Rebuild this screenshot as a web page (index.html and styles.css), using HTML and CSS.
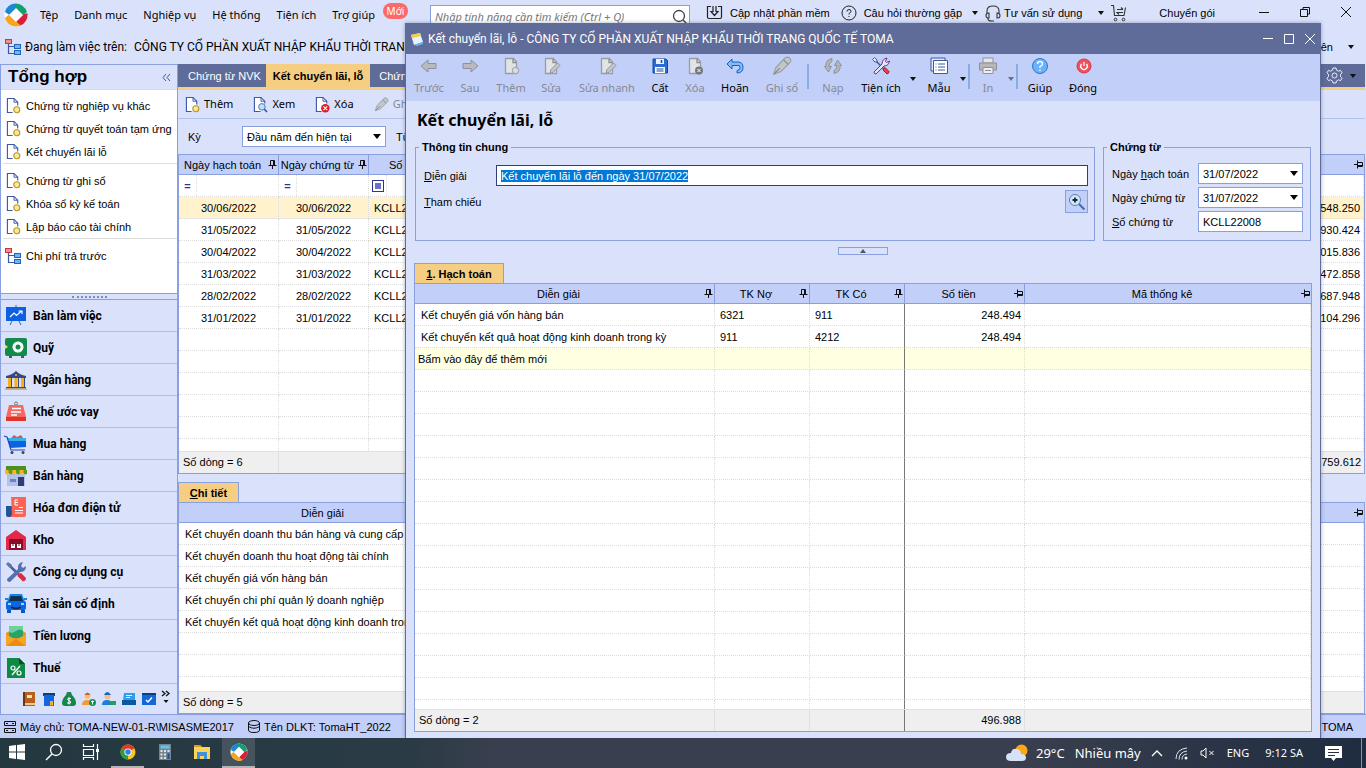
FILE: index.html
```html
<!DOCTYPE html>
<html lang="vi">
<head>
<meta charset="utf-8">
<title>Kết chuyển lãi, lỗ</title>
<link rel="stylesheet" href="styles.css">
</head>
<body>
<svg class="defs" aria-hidden="true">
  <symbol id="doc" viewBox="0 0 16 18"><path d="M7 16.500H1.500v-15h7l4 4V9" fill="#fff" stroke="#3d59a5" stroke-width="1.200"/><path d="M8.500 1.500v4h4" fill="none" stroke="#3d59a5"/><circle cx="11.500" cy="13.500" r="3.200" fill="#fbe98e" stroke="#b8942f" stroke-width="1.200"/></symbol>
  <symbol id="doc-view" viewBox="0 0 16 18"><path d="M8 16.500H1.500v-15h7l4 4V8" fill="#fff" stroke="#3d59a5" stroke-width="1.200"/><path d="M8.500 1.500v4h4" fill="none" stroke="#3d59a5"/><circle cx="9.500" cy="11.500" r="3.500" fill="#b6e2fb" stroke="#5173a8"/><path d="M12 14l3 3" stroke="#3d59a5" stroke-width="1.800"/></symbol>
  <symbol id="doc-del" viewBox="0 0 16 18"><path d="M7 16.500H1.500v-15h7l4 4V8" fill="#fff" stroke="#3d59a5" stroke-width="1.200"/><path d="M8.500 1.500v4h4" fill="none" stroke="#3d59a5"/><circle cx="11" cy="13" r="4.500" fill="#e01b24"/><path d="M9 11l4 4M13 11l-4 4" stroke="#fff" stroke-width="1.300"/></symbol>
  <symbol id="pen" viewBox="0 0 18 18"><path d="M1.500 16.500l2-6L11.500 2a2.800 2.800 0 0 1 4.500 4L8 14z" fill="#c3c5cc" stroke="#9a9ca3"/><path d="M2 16l5-5M10.500 3.500l4 4" stroke="#85878e" fill="none"/></symbol>
  <symbol id="tree" viewBox="0 0 18 18"><path d="M4.500 6v9.500H10M4.500 8.500H10" fill="none" stroke="#3d59a5" stroke-width="1.200"/><rect x="1.500" y="1.500" width="6" height="4" fill="#f58a8a" stroke="#c43c3c"/><rect x="10.500" y="6.500" width="6" height="4" fill="#6cb4fb" stroke="#1e64b4"/><rect x="10.500" y="12.500" width="6" height="4" fill="#6cb4fb" stroke="#1e64b4"/></symbol>
  <symbol id="pin" viewBox="0 0 9 9"><path d="M2.500 5V.5h4V5M.5 5.500h8M4.500 6v3" fill="none" stroke="#111"/><path d="M5.500 1v4" stroke="#111"/></symbol>
  <symbol id="pin-side" viewBox="0 0 9 9"><path d="M3.500 2.500h5v4h-5M3.500.5v8M0 4.500h3" fill="none" stroke="#111"/><path d="M4 5.500h4" stroke="#111"/></symbol>
  <symbol id="brand" viewBox="0 0 24 24"><circle cx="12" cy="12" r="11.500" fill="#fff"/><path d="M1 9A11.500 11.500 0 0 1 11 .6L13 5.500 5.500 12z" fill="#1b87d6"/><path d="M11 .6A11.500 11.500 0 0 1 23 9l-4.500 3.500-8-8z" fill="#14a06e"/><path d="M23.400 10A11.500 11.500 0 0 1 16 22.800L12 18.500l7-7z" fill="#d81f3c"/><path d="M17 22.500A11.500 11.500 0 0 1 1 15l4-3.500 8 8z" fill="#f8a41c"/><path d="M12 5l7 7-7 7-7-7z" fill="#fff"/></symbol>
  <symbol id="gray-doc" viewBox="0 0 20 20"><path d="M4.500 2.500h8l3 3.500v11.500h-11z" fill="#e2e3e7" stroke="#9b9da5" stroke-width="1.300"/><path d="M12 2.500V6.500h3.500" fill="none" stroke="#8b8d95" stroke-width="1.300"/></symbol>
  <symbol id="gray-pen" viewBox="0 0 20 20"><path d="M9 17.500l1-4 6.500-6.500 2.500 2.500-6.500 6.500z" fill="#c5c6cb" stroke="#94969d"/></symbol>
</svg>

<div class="desktop">
<div class="app">
  <header class="menubar">
    <svg class="brand"><use href="#brand"/></svg>
    <nav class="menu">
      <button>Tệp</button><button>Danh mục</button><button>Nghiệp vụ</button><button>Hệ thống</button><button>Tiện ích</button><button>Trợ giúp</button>
    </nav>
    <span class="badge">Mới</span>
    <label class="search"><input type="text" aria-label="Tìm tính năng" placeholder="Nhập tính năng cần tìm kiếm (Ctrl + Q)"><svg width="16" height="18" viewBox="0 0 16 18"><circle cx="7" cy="8" r="5.500" fill="none" stroke="#444" stroke-width="1.300"/><path d="M11 12l4 4" stroke="#444" stroke-width="1.500"/></svg></label>
    <button class="quick q-update"><svg width="17" height="16" viewBox="0 0 17 16"><path d="M5 1.500H1.500V12q0 1.500 1.500 1.500h11q1.500 0 1.500-1.500V1.500H12M7 1v5.500H5l3.500 4 3.500-4h-2V1" fill="none" stroke="#222" stroke-width="1.200"/></svg>Cập nhật phần mềm</button>
    <button class="quick q-faq"><svg width="16" height="16" viewBox="0 0 16 16"><circle cx="8" cy="8" r="7" fill="none" stroke="#222"/><path d="M6 6.500q0-2 2-2t2 1.800q0 1.200-2 2.200v1M8 11v1" fill="none" stroke="#222"/></svg>Câu hỏi thường gặp<i class="caret"></i></button>
    <button class="quick q-help"><svg width="16" height="17" viewBox="0 0 16 17"><path d="M2 8V6q0-5 6-5t6 5v2M4 8v5H3q-2 0-2-2.500T4 8zM12 8v5h1q2 0 2-2.500T12 8zM3 13v1q0 2 4 2h2" fill="none" stroke="#333" stroke-width="1.100"/></svg>Tư vấn sử dụng<i class="caret"></i></button>
    <button class="quick q-cart" aria-label="Mua hàng"><svg width="16" height="17" viewBox="0 0 16 17"><path d="M0 .5h2.500l1 10h9.500l1.500-8M6 4.500h6M10 2.500l2 2M12 7.500H6l2 2" fill="none" stroke="#333" stroke-width="1.100"/><circle cx="4.500" cy="14.500" r="1.300" fill="none" stroke="#333"/><circle cx="12.500" cy="14.500" r="1.300" fill="none" stroke="#333"/></svg></button>
    <button class="quick">Chuyển gói</button>
    <div class="win-ctl dark">
      <button aria-label="Thu nhỏ"><svg viewBox="0 0 12 12"><path d="M1 6.500h10"/></svg></button>
      <button aria-label="Khôi phục"><svg viewBox="0 0 12 12"><path d="M1.500 3.500h7v7h-7zM4 3V1.500h6.500V8H9"/></svg></button>
      <button aria-label="Đóng"><svg viewBox="0 0 12 12"><path d="M1 1l10 10M11 1L1 11"/></svg></button>
    </div>
  </header>
  <div class="workbar">
    <svg width="18" height="18"><use href="#tree"/></svg>
    <span>Đang làm việc trên:</span>
    <span class="company">CÔNG TY CỔ PHẦN XUẤT NHẬP KHẨU THỜI TRANG QUỐC TẾ TOMA</span>
    <button class="user">ên<i class="caret"></i></button>
  </div>

  <div class="main">
    <aside class="side">
      <h2>Tổng hợp<svg width="9" height="9" viewBox="0 0 9 9"><path d="M4 1L1 4.500 4 8M8 1L5 4.500 8 8" fill="none" stroke="#3d59a5"/></svg></h2>
      <div class="links">
        <button><svg><use href="#doc"/></svg>Chứng từ nghiệp vụ khác</button>
        <button><svg><use href="#doc"/></svg>Chứng từ quyết toán tạm ứng</button>
        <button><svg><use href="#doc"/></svg>Kết chuyển lãi lỗ</button>
        <hr>
        <button><svg><use href="#doc"/></svg>Chứng từ ghi sổ</button>
        <button><svg><use href="#doc"/></svg>Khóa sổ kỳ kế toán</button>
        <button><svg><use href="#doc"/></svg>Lập báo cáo tài chính</button>
        <hr>
        <button><svg class="tree"><use href="#tree"/></svg>Chi phí trả trước</button>
      </div>
      <div class="grip"><i></i></div>
      <nav class="modules">
        <button><svg viewBox="0 0 22 22"><path d="M7 16l-2 4M14 16l2 4M11 0v3" stroke="#3a62a8" fill="none"/><path d="M1 2h20v14H1z" fill="#0b5fe0"/><path d="M5 12l4-4 2.500 2.500 5-4.500M13.500 6H17v3" fill="none" stroke="#fff" stroke-width="1.200"/></svg>Bàn làm việc</button>
        <button><svg viewBox="0 0 22 22"><rect y="1" width="22" height="18" rx="2" fill="#128a4a"/><circle cx="13" cy="10" r="4" fill="none" stroke="#fff" stroke-width="3"/><path d="M13 4.500v2M13 13.500v2M7.500 10h2M16.500 10h2" stroke="#bfe8cf"/><path d="M0 7.500L3 10 0 12z" fill="#f4e33c"/><path d="M4 20h3M16 20h3" stroke="#555" stroke-width="2"/></svg>Quỹ</button>
        <button><svg viewBox="0 0 22 22"><path d="M1 7q6-1 10-5 4 4 10 5v2H1z" fill="#35488a"/><circle cx="11" cy="6" r="1" fill="#f5b82a"/><path d="M3 9h3v9H3zM9.500 9h3v9h-3zM16 9h3v9h-3z" fill="#f5b01e"/><path d="M6.500 9v9M13.500 9v9M19.500 9v9" stroke="#35488a"/><path d="M1 18h20v1.500H1z" fill="#35488a"/><path d="M0 19.500h22V21H0z" fill="#e9b142"/></svg>Ngân hàng</button>
        <button><svg viewBox="0 0 22 22"><circle cx="11" cy="2.500" r="1.500" fill="none" stroke="#777"/><path d="M4 4h14l3 12H1z" fill="#f46a62"/><path d="M1 16h20v4H1z" fill="#e23326"/><path d="M7 7.500h9M6 11h10M6 14h6" stroke="#fff" stroke-width="1.500"/></svg>Khế ước vay</button>
        <button><svg viewBox="0 0 22 22"><path d="M6 5l3-3 3 2 4-2 2 3z" fill="#cf5e48"/><path d="M3 5h18v9L5 15z" fill="#0b63e0"/><path d="M3 5h18v3H4z" fill="#36b0ea"/><path d="M-1 3l3 1 4 13h14" fill="none" stroke="#2146c7" stroke-width="1.200"/><circle cx="7" cy="19.500" r="1.500" fill="#444"/><circle cx="18" cy="19.500" r="1.500" fill="#444"/></svg>Mua hàng</button>
        <button><svg viewBox="0 0 22 22"><path d="M2 9h18v12H2z" fill="#b3c0e8"/><path d="M5 14h6v3H5z" fill="#6c82c6"/><path d="M13 12h6v9h-6z" fill="#2f3c74"/><path d="M1 1h20v5H1z" fill="#4f8e22"/><path d="M0 5h22v3q-1.800 3-3.600 0-1.900 3-3.700 0-1.900 3-3.700 0-1.900 3-3.700 0-1.900 3-3.700 0Q1.800 11 0 8z" fill="#f9b51c"/><path d="M3.600 5h3.700v4q-2 1-3.700-1zM11 5h3.700v4q-2 1-3.700-1zM18.400 5H22v4q-2 1-3.600-1z" fill="#5b9a27"/></svg>Bán hàng</button>
        <button><svg viewBox="0 0 22 22"><path d="M1 9h7v11H3q-2 0-2-2z" fill="#1d5796"/><path d="M6 0h15v18q0 2-2 2H5q2-1 2-3z" fill="#fb6455"/><path d="M13 3h-3v5h3M10 5.500h3M14 10.500h4M10 13.500h8M10 16h8" fill="none" stroke="#fff"/></svg>Hóa đơn điện tử</button>
        <button><svg viewBox="0 0 22 22"><path d="M1 8l10-7 10 7v13H1z" fill="#e3284a"/><path d="M4 10h14v11H4z" fill="#8b0c26"/><path d="M6 15h4v4H6zM12 15h4v4h-4z" fill="#fff"/><path d="M8 15v2M14 15v2" stroke="#8b0c26"/></svg>Kho</button>
        <button><svg viewBox="0 0 22 22"><path d="M3 3l13 13" stroke="#46609f" stroke-width="2.500"/><path d="M13 13l3-1 5 5q0 3-3 3.500l-5-5z" fill="#d42f45"/><path d="M1 3l2-2 4 3v2L5 7z" fill="#5a77b8"/><path d="M2 18L13 8q-1-6 5-7l-2 4 2 2 3-2q0 6-6 6L5 21q-3 0-3-3z" fill="#5470b0"/></svg>Công cụ dụng cụ</button>
        <button><svg viewBox="0 0 22 22"><path d="M5 1h12l3 8H2z" fill="#1684e2"/><path d="M6 3h10l2 5H4z" fill="#0e3052"/><rect x="1" y="8" width="20" height="9" rx="2" fill="#0b66e4"/><path d="M0 6h3M19 6h3" stroke="#1684e2" stroke-width="2"/><path d="M6 14q5 3 10 0" stroke="#0e3052" stroke-width="2" fill="none"/><path d="M3 11h3M16 11h3" stroke="#9fd2ff" stroke-width="2"/><path d="M2 17h4v3H2zM16 17h4v3h-4z" fill="#0b56c4"/></svg>Tài sản cố định</button>
        <button><svg viewBox="0 0 22 22"><path d="M1 8l10-6 10 6v12H1z" fill="#e5932a"/><path d="M4 1h14v12H4z" fill="#27a365"/><path d="M4 1h14v5q-3-3-7 0T4 7z" fill="#6fd09d"/><path d="M1 9l10 6 10-6v12H1z" fill="#f7a326"/><path d="M1 21l10-7 10 7z" fill="#ef8b0c"/></svg>Tiền lương</button>
        <button><svg viewBox="0 0 22 22"><path d="M2 1h12l6 6v14H2z" fill="#0f8a46"/><path d="M14 1v6h6z" fill="#0a4f29"/><path d="M7 18l8-9" stroke="#fff" stroke-width="1.300"/><circle cx="8" cy="11" r="2" fill="none" stroke="#fff" stroke-width="1.200"/><circle cx="14" cy="16" r="2" fill="none" stroke="#fff" stroke-width="1.200"/></svg>Thuế</button>
      </nav>
      <div class="mini">
        <svg viewBox="0 0 14 14"><path d="M1 0h12v14H1z" fill="#b8601b"/><path d="M1 0h2v14H1z" fill="#6b3510"/><path d="M5 3h5v3H5z" fill="#fbe2b0"/><path d="M3 11h10v2H3z" fill="#f0c98b"/></svg>
        <svg viewBox="0 0 14 14"><path d="M1 1h12v3H1z" fill="#0a3f80"/><path d="M2 3h10v11H2z" fill="#1466e0"/><path d="M8 9h3v5l-1.500-1L8 14z" fill="#f5b02a"/></svg>
        <svg viewBox="0 0 14 14"><path d="M5 0h4l1 3H4z" fill="#27824c"/><path d="M4 3h6q4 4 4 8 0 3-3 3H3q-3 0-3-3 0-4 4-8z" fill="#13884a"/><path d="M9 6.500H6q-1 1.500 1 2t1.500 2.500H5M7 5v7.500" stroke="#fff" fill="none"/></svg>
        <svg viewBox="0 0 14 14"><circle cx="5.500" cy="4" r="3" fill="#f9bd83"/><path d="M2.500 3q3-5 6 0z" fill="#d45d1c"/><path d="M0 13q0-5 5-5t5 5z" fill="#f39b34"/><circle cx="10.500" cy="10.500" r="3.500" fill="#12925a"/><path d="M10.500 8.500v4M9 9.500h3" stroke="#fff"/></svg>
        <svg viewBox="0 0 14 14"><circle cx="5.500" cy="4.500" r="3" fill="#f9bd83"/><path d="M2 3q3-6 7 0z" fill="#1466c0"/><path d="M0 13q0-5 5-5t5 5z" fill="#1d7ee0"/><path d="M8 9h6v4H8z" fill="#22a064"/></svg>
        <svg viewBox="0 0 14 14"><path d="M2 1h11v8H1z" fill="#2d9ded"/><path d="M4 3.500h6M4 5.500h4" stroke="#fff"/><path d="M0 8h14v5H0z" fill="#0c57a0"/></svg>
        <svg viewBox="0 0 14 14"><path d="M0 1h14v12H0z" fill="#1268d8"/><path d="M0 1h14v2H0z" fill="#083f88"/><path d="M4 8l2 2 4-4.500" stroke="#fff" stroke-width="1.500" fill="none"/></svg>
        <svg class="more" viewBox="0 0 8 14"><path d="M0 1l3 2.500L0 6M4 1l3 2.500L4 6" stroke="#111" stroke-width="1.300" fill="none"/><path d="M1.500 10h5L4 13z" fill="#111"/></svg>
      </div>
    </aside>

    <section class="content">
      <div class="tabs"><button class="first">Chứng từ NVK</button><button class="on">Kết chuyển lãi, lỗ</button><button>Chứng</button>
        <button class="gear" aria-label="Tùy chọn"><svg width="17" height="17" viewBox="0 0 17 17"><path d="M7 1h3l.5 2.200 2 1L14.500 3.300l1.500 2.500-1.500 1.700v2L16 11.200l-1.500 2.500-2-.9-2 1.200L10 16H7l-.5-2-2-1.200-2 .9L1 11.200l1.500-1.700v-2L1 5.800l1.500-2.500 2 .9 2-1z" fill="none" stroke="#e8ecfa"/><circle cx="8.500" cy="8.500" r="2.500" fill="none" stroke="#e8ecfa"/></svg><i class="caret"></i></button></div>
      <div class="tools">
        <button><svg><use href="#doc"/></svg>Thêm</button><button><svg><use href="#doc-view"/></svg>Xem</button><button><svg><use href="#doc-del"/></svg>Xóa</button><button disabled><svg><use href="#pen"/></svg>Ghi sổ</button>
      </div>
      <div class="filter"><label for="ky">Kỳ</label><span class="combo"><select id="ky"><option>Đầu năm đến hiện tại</option></select></span><span>Từ</span></div>
      <div class="grid upper">
        <div class="rows">
        <table>
          <colgroup><col class="c-100"><col class="c-90"><col class="c-100"><col><col class="c-100"></colgroup>
          <thead><tr><th>Ngày hạch toán<svg><use href="#pin"/></svg></th><th>Ngày chứng từ<svg><use href="#pin"/></svg></th><th class="cut">Số</th><th></th><th><svg><use href="#pin-side"/></svg></th></tr></thead>
          <tbody>
            <tr class="find"><td><b class="op">=</b></td><td><b class="op">=</b></td><td><b class="op"><i class="box"></i></b></td><td></td><td></td></tr>
            <tr class="sel"><td>30/06/2022</td><td>30/06/2022</td><td class="l">KCLL22</td><td></td><td class="r">548.250</td></tr>
            <tr><td>31/05/2022</td><td>31/05/2022</td><td class="l">KCLL22</td><td></td><td class="r">930.424</td></tr>
            <tr><td>30/04/2022</td><td>30/04/2022</td><td class="l">KCLL22</td><td></td><td class="r">015.836</td></tr>
            <tr><td>31/03/2022</td><td>31/03/2022</td><td class="l">KCLL22</td><td></td><td class="r">472.858</td></tr>
            <tr><td>28/02/2022</td><td>28/02/2022</td><td class="l">KCLL22</td><td></td><td class="r">687.948</td></tr>
            <tr><td>31/01/2022</td><td>31/01/2022</td><td class="l">KCLL22</td><td></td><td class="r">104.296</td></tr>
            <tr><td></td><td></td><td></td><td></td><td></td></tr><tr><td></td><td></td><td></td><td></td><td></td></tr><tr><td></td><td></td><td></td><td></td><td></td></tr><tr><td></td><td></td><td></td><td></td><td></td></tr><tr><td></td><td></td><td></td><td></td><td></td></tr><tr><td></td><td></td><td></td><td></td><td></td></tr>
          </tbody>
        </table>
        </div>
        <div class="foot"><span class="c-100 cell">Số dòng = 6</span><span class="sum">759.612</span></div>
      </div>
      <div class="lower">
        <button class="tab"><u>C</u>hi tiết</button>
        <div class="grid">
          <div class="rows">
          <table>
            <colgroup><col class="c-300"><col></colgroup>
            <thead><tr><th>Diễn giải</th><th><svg><use href="#pin-side"/></svg></th></tr></thead>
            <tbody class="left">
              <tr><td>Kết chuyển doanh thu bán hàng và cung cấp</td><td></td></tr>
              <tr><td>Kết chuyển doanh thu hoạt động tài chính</td><td></td></tr>
              <tr><td>Kết chuyển giá vốn hàng bán</td><td></td></tr>
              <tr><td>Kết chuyển chi phí quản lý doanh nghiệp</td><td></td></tr>
              <tr><td>Kết chuyển kết quả hoạt động kinh doanh trong kỳ</td><td></td></tr>
              <tr><td></td><td></td></tr><tr><td></td><td></td></tr><tr><td></td><td></td></tr>
            </tbody>
          </table>
          </div>
          <div class="foot"><span class="cell plain">Số dòng = 5</span></div>
        </div>
      </div>
    </section>
  </div>

  <footer class="status">
    <svg width="12" height="12" viewBox="0 0 12 12"><path d="M.5.500h11v4H.5zM.5 7.500h11v4H.5zM2 2.500h2M2 9.500h2M8 2.500h2M8 9.500h2" fill="none" stroke="#111"/></svg><span>Máy chủ: TOMA-NEW-01-R\MISASME2017</span>
    <svg class="db" width="12" height="13" viewBox="0 0 12 13"><ellipse cx="6" cy="3" rx="5.500" ry="2.500" fill="none" stroke="#111"/><path d="M.5 3v7q0 2.500 5.500 2.500t5.500-2.500V3M.5 6.500Q6 10 11.500 6.500" fill="none" stroke="#111"/></svg><span>Tên DLKT: TomaHT_2022</span>
    <span class="who">TOMA</span>
  </footer>

  <div class="dialog" role="dialog" aria-label="Kết chuyển lãi, lỗ">
    <div class="title"><svg width="14" height="14" viewBox="0 0 14 14"><path d="M1 3l9-2 3 9-9 3z" fill="#e6f2fd"/><path d="M1 3l9-2 1 3-9 2z" fill="#f4cf45"/><path d="M4 13l9-3v2l-6 2z" fill="#6fb2ea"/></svg><span>Kết chuyển lãi, lỗ - CÔNG TY CỔ PHẦN XUẤT NHẬP KHẨU THỜI TRANG QUỐC TẾ TOMA</span>
      <div class="win-ctl light">
        <button aria-label="Thu nhỏ"><svg viewBox="0 0 12 12"><path d="M1 5.500h10"/></svg></button>
        <button aria-label="Phóng to"><svg viewBox="0 0 12 12"><path d="M1.500 1.500h9v9h-9z"/></svg></button>
        <button aria-label="Đóng"><svg viewBox="0 0 12 12"><path d="M1 1l10 10M11 1L1 11"/></svg></button>
      </div>
    </div>
    <div class="bar">
      <button class="w40" disabled><svg viewBox="0 0 20 20"><path d="M2 10l7-6v3.500h8v5H9V16z" fill="#b9bac0" stroke="#8f9198"/></svg>Trước</button>
      <button class="w42" disabled><svg viewBox="0 0 20 20"><path d="M18 10l-7-6v3.500H3v5h8V16z" fill="#b9bac0" stroke="#8f9198"/></svg>Sau</button>
      <button class="w40" disabled><svg viewBox="0 0 20 20"><use href="#gray-doc"/><circle cx="14.500" cy="14.500" r="3.200" fill="#dcdde1" stroke="#9b9da5"/></svg>Thêm</button>
      <button class="w40" disabled><svg viewBox="0 0 20 20"><use href="#gray-doc"/><use href="#gray-pen"/></svg>Sửa</button>
      <button class="w72" disabled><svg viewBox="0 0 20 20"><use href="#gray-doc"/><use href="#gray-pen"/></svg>Sửa nhanh</button>
      <button class="w34"><svg viewBox="0 0 20 20"><path d="M3 3h13l1.500 1.500V17H3z" fill="#2a6bd0" stroke="#134a9c"/><path d="M6 3h8v5H6z" fill="#e8f1fd"/><path d="M11.500 4v3" stroke="#134a9c" stroke-width="1.500"/><path d="M5 11h10v6H5z" fill="#fff"/><path d="M6.500 13h7M6.500 15h7" stroke="#134a9c"/></svg>Cất</button>
      <button class="w36" disabled><svg viewBox="0 0 20 20"><use href="#gray-doc"/><circle cx="14" cy="14.500" r="4" fill="#77797f"/><path d="M12.500 13l3 3M15.500 13l-3 3" stroke="#fff"/></svg>Xóa</button>
      <button class="w44"><svg viewBox="0 0 20 20"><path d="M2 8l5-5v3h6q5 0 5 5.500T12 17v-2.500q3 0 3-3T12 9.500H7v3.500z" fill="#7fbcfa" stroke="#1763c0"/></svg>Hoãn</button>
      <button class="w50" disabled><svg viewBox="0 0 18 18"><use href="#pen"/></svg>Ghi sổ</button>
      <i class="sep"></i>
      <button class="w48" disabled><svg viewBox="0 0 20 20"><path d="M9 2.500Q2 4 3 10.500H1.500l4 5.500 3-5.500H6Q6 6.500 9 5.500zM11 17.500q7-1.500 6-8h1.500l-4-5.500-3 5.500H14q0 4-3 5z" fill="#b4b6bd" stroke="#84868d" stroke-width=".8"/></svg>Nạp</button>
      <button class="w48"><svg viewBox="0 0 20 20"><path d="M4 4l11 11" stroke="#3f599c" stroke-width="1.500"/><path d="M1.500 3.500l2-2L6 4v2H4z" fill="#dfe7f8" stroke="#3f599c"/><path d="M3 16L11 8q0-5 5-6l-1.500 3.500 1 1L18.500 5q-1 5-5.500 5L5 18q-2 0-2-2z" fill="#dfe7f8" stroke="#7a2f86"/><path d="M12.500 12.500l1.500-1 4 4q0 2-2 2.500l-4-4z" fill="#e8424a" stroke="#9b1c28"/></svg>Tiện ích</button><button class="drop w15" aria-label="Mở tiện ích"><i class="caret"></i></button>
      <button class="w38"><svg viewBox="0 0 20 20"><path d="M2 2h14v13H2z" fill="#dfe8fb" stroke="#3f599c"/><path d="M4.500 4.500h14v13h-14z" fill="#fff" stroke="#3f599c"/><path d="M6.500 8h1M9 8h7M6.500 11h1M9 11h7M6.500 14h1M9 14h7" stroke="#3f599c"/></svg>Mẫu</button><button class="drop w10" aria-label="Chọn mẫu"><i class="caret"></i></button>
      <i class="sep"></i>
      <button class="w36" disabled><svg viewBox="0 0 20 20"><path d="M5 2h10v5H5z" fill="#e5e5e8" stroke="#8f9198"/><path d="M1.500 7h17v7h-17z" fill="#b6b7bc" stroke="#8f9198"/><path d="M5 11.500h10v6H5z" fill="#eee" stroke="#8f9198"/><path d="M7 14.500h6" stroke="#8f9198"/></svg>In</button><button class="drop w10" disabled aria-label="Chọn in"><i class="caret"></i></button>
      <i class="sep"></i>
      <button class="w44"><svg viewBox="0 0 20 20"><circle cx="10" cy="10" r="7.500" fill="#6cb2fb" stroke="#2d76cc"/><path d="M7.500 8q0-2.500 2.500-2.500T12.500 8q0 1.500-2.500 2.500V12M10 13.500V15" fill="none" stroke="#fff" stroke-width="1.300"/></svg>Giúp</button>
      <button class="w42"><svg viewBox="0 0 20 20"><circle cx="11" cy="10" r="7" fill="#f0525c" stroke="#d23a46"/><path d="M8.500 8a3.300 3.300 0 1 0 5 0M11 6v4" fill="none" stroke="#fff" stroke-width="1.300"/></svg>Đóng</button>
    </div>
    <div class="body">
      <h1>Kết chuyển lãi, lỗ</h1>
      <div class="boxes">
        <fieldset class="general"><legend>Thông tin chung</legend>
          <div class="line"><label for="dg"><u>D</u>iễn giải</label><input id="dg" type="text" value="Kết chuyển lãi lỗ đến ngày 31/07/2022"></div>
          <div class="line"><span class="lab"><u>T</u>ham chiếu</span><button class="zoom" aria-label="Chọn tham chiếu"><svg width="18" height="18" viewBox="0 0 18 18"><circle cx="7" cy="7" r="5.500" fill="#c9eafb" stroke="#5b7fb5"/><path d="M7 4.500v5M4.500 7h5" stroke="#223" stroke-width="1.800"/><path d="M11 11l5.500 5.500" stroke="#4c6db0" stroke-width="2.200"/></svg></button></div>
        </fieldset>
        <fieldset class="voucher"><legend>Chứng từ</legend>
          <div class="line"><label for="d1">Ngày <u>h</u>ạch toán</label><span class="combo"><select id="d1"><option>31/07/2022</option></select></span></div>
          <div class="line"><label for="d2">Ngày <u>c</u>hứng từ</label><span class="combo"><select id="d2"><option>31/07/2022</option></select></span></div>
          <div class="line"><label for="no"><u>S</u>ố chứng từ</label><input id="no" type="text" value="KCLL22008"></div>
        </fieldset>
      </div>
      <button class="fold" aria-label="Thu gọn"><i></i></button>
      <button class="tab wide"><u>1</u>. Hạch toán</button>
      <div class="grid entry">
        <div class="rows">
        <table>
          <colgroup><col class="c-300"><col class="c-95"><col class="c-95"><col class="c-120"><col></colgroup>
          <thead><tr><th>Diễn giải<svg><use href="#pin"/></svg></th><th>TK Nợ<svg><use href="#pin"/></svg></th><th>TK Có<svg><use href="#pin"/></svg></th><th>Số tiền<svg><use href="#pin-side"/></svg></th><th>Mã thống kê<svg><use href="#pin-side"/></svg></th></tr></thead>
          <tbody class="left">
            <tr><td>Kết chuyển giá vốn hàng bán</td><td>6321</td><td>911</td><td class="r">248.494</td><td></td></tr>
            <tr><td>Kết chuyển kết quả hoạt động kinh doanh trong kỳ</td><td>911</td><td>4212</td><td class="r">248.494</td><td></td></tr>
            <tr class="new"><td>Bấm vào đây để thêm mới</td><td></td><td></td><td></td><td></td></tr>
            <tr><td></td><td></td><td></td><td></td><td></td></tr><tr><td></td><td></td><td></td><td></td><td></td></tr><tr><td></td><td></td><td></td><td></td><td></td></tr><tr><td></td><td></td><td></td><td></td><td></td></tr><tr><td></td><td></td><td></td><td></td><td></td></tr><tr><td></td><td></td><td></td><td></td><td></td></tr><tr><td></td><td></td><td></td><td></td><td></td></tr><tr><td></td><td></td><td></td><td></td><td></td></tr><tr><td></td><td></td><td></td><td></td><td></td></tr><tr><td></td><td></td><td></td><td></td><td></td></tr><tr><td></td><td></td><td></td><td></td><td></td></tr><tr><td></td><td></td><td></td><td></td><td></td></tr><tr><td></td><td></td><td></td><td></td><td></td></tr><tr><td></td><td></td><td></td><td></td><td></td></tr><tr><td></td><td></td><td></td><td></td><td></td></tr><tr><td></td><td></td><td></td><td></td><td></td></tr>
          </tbody>
        </table>
        </div>
        <div class="foot"><span class="c-300 cell">Số dòng = 2</span><span class="c-95 cell"></span><span class="c-95 cell strong"></span><span class="c-120 cell r">496.988</span></div>
      </div>
    </div>
  </div>
</div>

<div class="taskbar">
  <button class="t" aria-label="Bắt đầu"><svg viewBox="0 0 18 18"><path d="M1 3l7-1v6.500H1zM9 2l8-1v7.500H9zM1 9.500h7V16l-7-1zM9 9.500h8V17l-8-1z" fill="#fff"/></svg></button>
  <button class="t" aria-label="Tìm kiếm"><svg viewBox="0 0 18 18"><circle cx="11" cy="7" r="5.500" fill="none" stroke="#fff" stroke-width="1.300"/><path d="M7 11l-6 6" stroke="#fff" stroke-width="1.500"/></svg></button>
  <button class="t" aria-label="Xem tác vụ"><svg viewBox="0 0 18 18"><path d="M1.500 1v2.500h10V1M1.500 6.500h10v6h-10zM1.500 17v-2.500h10V17M15.500 1v16" fill="none" stroke="#fff" stroke-width="1.200"/><path d="M14 6h3v3h-3z" fill="#fff"/></svg></button>
  <button class="t open" aria-label="Chrome"><svg viewBox="0 0 18 18"><circle cx="9" cy="9" r="7.500" fill="#f7c51e"/><path d="M9 9L2.500 5.200A7.500 7.500 0 0 1 15.500 5.200z" fill="#e0392b"/><path d="M9 9L2.500 5.200A7.500 7.500 0 0 0 9 16.500z" fill="#2a9d4b"/><circle cx="9" cy="9" r="3.600" fill="#fff"/><circle cx="9" cy="9" r="2.700" fill="#2f7de8"/></svg></button>
  <button class="t" aria-label="Máy tính"><svg viewBox="0 0 18 18"><path d="M3 1h12v16H3z" fill="#76848e"/><path d="M4.500 2.500h9v3h-9z" fill="#5ec3f0"/><path d="M4.500 7h2v2h-2zM8 7h2v2H8zM4.500 10.500h2v2h-2zM8 10.500h2v2H8zM4.500 14h2v2h-2zM8 14h2v2H8zM11.500 7h2v2h-2z" fill="#dce4e8"/><path d="M11.500 10.500h2V16h-2z" fill="#1b4f9e"/></svg></button>
  <button class="t" aria-label="Thư mục"><svg viewBox="0 0 18 18"><path d="M1 2h6l2 2h8v12H1z" fill="#fbd25a"/><path d="M1 2h6l1.500 2H1z" fill="#d89b1b"/><path d="M4 9h10v7h-3v-3H7v3H4z" fill="#3b91dc"/></svg></button>
  <button class="t open active" aria-label="MISA"><svg viewBox="0 0 18 18"><use href="#brand"/></svg></button>
  <div class="tray">
    <svg width="22" height="18" viewBox="0 0 22 18"><circle cx="15.500" cy="6.500" r="6" fill="#fba918"/><path d="M5 17q-5 0-5-4t5-4q1-5 6-4 4 1 4 5 5 0 5 3.500T16 17z" fill="#d5e2f8"/></svg>
    <span class="temp">29°C</span><span class="temp sky">Nhiều mây</span>
    <svg width="12" height="7" viewBox="0 0 12 7"><path d="M1 6l5-5 5 5" fill="none" stroke="#fff" stroke-width="1.300"/></svg>
    <svg width="13" height="13" viewBox="0 0 13 13"><path d="M1 12Q1 2 12 1M4 12.500Q4 5 12 4M7 12.500Q7 7.500 12 7" fill="none" stroke="#dfe3ea"/><circle cx="11" cy="11" r="1.500" fill="#fff"/></svg>
    <svg width="15" height="12" viewBox="0 0 15 12"><path d="M1 4h2l3-3v10L3 8H1zM9.500 4l4 4M13.500 4l-4 4" fill="none" stroke="#fff"/></svg>
    <span class="lang">ENG</span><span class="clock">9:12 SA</span>
    <svg width="17" height="17" viewBox="0 0 17 17"><path d="M0 1h17v12h-6l-2.500 3L6 13H0z" fill="#fff"/><path d="M3 4.500h11M3 7.500h11M3 10.500h7" stroke="#263142"/></svg>
    <i class="edge"></i>
  </div>
</div>
</div>
<script src="app.js"></script>
</body>
</html>
```
FILE: styles.css
```css
:root {
  --bg: #dae2fb;
  --head: #c2cff9;
  --line: #8a9fdf;
  --title: #5f6c99;
  --gold: #f5cd83;
  --dot: #dcdcdc;
  --ui: "Noto Sans", "Open Sans", sans-serif;
  --caption: Roboto, "Noto Sans", sans-serif;
}
* { box-sizing: border-box; }
body { margin: 0; font: 11px/14px "Liberation Sans", Arial, sans-serif; color: #000; }
button { font: inherit; color: inherit; background: none; border: 0; padding: 0; white-space: nowrap; }
input, select { font: inherit; color: inherit; border: 1px solid var(--line); background: #fff; border-radius: 0; outline: 0; min-width: 0; }
svg { flex: none; overflow: visible; }
.defs { position: absolute; width: 0; height: 0; }
.caret { border: 3px solid transparent; border-top: 4px solid #111; border-bottom: 0; }

.desktop { display: flex; flex-direction: column; height: 100vh; overflow: hidden; }
.app { position: relative; flex: 1; min-height: 0; display: flex; flex-direction: column; background: var(--bg); overflow: hidden; }

/* top bars */
.menubar { display: flex; align-items: center; height: 30px; padding-left: 4px; font-family: var(--ui); white-space: nowrap; }
.brand { width: 24px; height: 24px; margin-right: 12px; }
.menu { display: flex; gap: 16px; }
.badge { align-self: flex-start; margin: 3px 22px 0 8px; width: 25px; border-radius: 8px; background: #fb6a68; color: #fff; font: 10px/16px var(--ui); text-align: center; }
.search { display: flex; align-items: center; align-self: flex-end; width: 260px; height: 25px; background: #fff; border: 1px solid var(--line); padding: 0 1px 2px 4px; }
.search input { flex: 1; border: 0; font: italic 11px/14px var(--ui); padding: 0; }
.search input::placeholder { color: #777; }
.quick { display: flex; align-items: center; gap: 7px; font-family: "Liberation Sans", Arial, sans-serif; padding-bottom: 4px; }
.q-update { margin-left: 16px; }
.q-faq { margin-left: 11px; }
.q-faq .caret { margin-left: 3px; }
.q-help { margin-left: 7px; gap: 3px; }
.q-help .caret { margin-left: 13px; }
.q-cart { margin: 0 32px 0 7px; }
.win-ctl { display: flex; margin-left: auto; }
.win-ctl svg { display: block; width: 12px; height: 12px; fill: none; }
.dark { gap: 29px; padding: 0 14px 6px 0; }
.dark svg { stroke: #111; }
.light { gap: 9px; padding-right: 4px; }
.light svg { stroke: #fff; }
.workbar { display: flex; align-items: center; height: 34px; padding: 0 12px 0 4px; font: 12px/16px var(--caption); white-space: nowrap; }
.workbar > span { margin-left: 3px; }
.workbar .company { margin-left: 7px; }
.user { display: flex; align-items: center; gap: 15px; margin-left: auto; font: 11px/14px "Liberation Sans", Arial, sans-serif; }

.main { flex: 1; min-height: 0; display: flex; }

/* sidebar */
.side { width: 178px; flex: none; display: flex; flex-direction: column; border: solid var(--line); border-width: 1px 1px 0; }
.side h2 { display: flex; align-items: center; justify-content: space-between; margin: 0; padding: 0 6px 0 7px; height: 24px; font-size: 17px; line-height: 24px; }
.links { flex: 1; min-height: 0; overflow: hidden; background: #fff; border-top: 1px solid #d0d7ee; padding: 4px 0 0 2px; }
.links button { display: flex; align-items: center; width: 100%; height: 23px; padding-left: 3px; gap: 5px; }
.links svg { width: 15px; height: 17px; }
.links .tree { width: 18px; height: 18px; margin: 0 -1px 0 -2px; }
.links hr { border: 0; border-top: 1px solid #ddd; margin: 0 0 5px; }
.grip { height: 7px; flex: none; border: solid var(--line); border-width: 1px 0; display: flex; justify-content: center; align-items: center; }
.grip i { width: 35px; border-top: 2px dotted #6f8fc9; }
.modules { display: flex; flex-direction: column; }
.modules button { display: flex; align-items: center; gap: 6px; height: 32px; padding-left: 4px; border-bottom: 1px solid #aebfea; font: bold 12px/16px var(--caption); }
.modules svg { width: 22px; height: 22px; }
.mini { display: flex; align-items: center; gap: 6px; height: 30px; padding-left: 21px; }
.mini svg { width: 14px; height: 14px; }
.mini .more { width: 8px; margin-top: -4px; }

/* document area */
.content { flex: 1; min-width: 0; display: flex; flex-direction: column; padding-right: 1px; }
.tabs { display: flex; height: 26px; background: var(--title); border-bottom: 3px solid var(--gold); color: #fff; }
.tabs button { padding: 0 9px; }
.tabs .first { padding: 0 5px 0 10px; }
.tabs .on { background: var(--gold); color: #000; font-weight: bold; padding: 0 7px; }
.tabs .gear { display: flex; align-items: center; gap: 7px; margin-left: auto; }
.tools { display: flex; align-items: center; height: 29px; gap: 20px; padding-left: 7px; border-bottom: 1px solid #b3c1ee; font: 11px/14px var(--ui); }
.tools button { display: flex; align-items: center; gap: 4px; }
.tools svg { width: 15px; height: 17px; }
button:disabled { color: #858993; }
.filter { display: flex; align-items: center; height: 35px; padding-left: 10px; gap: 10px; }
.filter label { width: 44px; }
.filter .combo { width: 144px; }
.combo { position: relative; display: flex; }
.combo::after { content: ""; position: absolute; right: 5px; top: 8px; border: 4px solid transparent; border-top: 5px solid #000; border-bottom: 0; pointer-events: none; }
.combo select { appearance: none; width: 100%; height: 21px; padding: 0 4px; }

/* grids */
.grid { display: flex; flex-direction: column; min-height: 0; border: 1px solid var(--line); background: #fff; }
.upper { flex: 57 1 0; }
.lower { flex: 43 1 0; min-height: 0; display: flex; flex-direction: column; }
.lower .tab { margin-top: 8px; }
.lower .grid { flex: 1; }
.rows { flex: 1; min-height: 0; overflow: hidden; }
table { width: 100%; table-layout: fixed; border-collapse: separate; border-spacing: 0; }
.c-90 { width: 90px; } .c-95 { width: 95px; } .c-100 { width: 100px; } .c-120 { width: 120px; } .c-300 { width: 300px; }
th { position: relative; height: 20px; padding: 0 12px 0 0; font-weight: normal; background: var(--head); border: solid var(--line); border-width: 0 1px 1px 0; white-space: nowrap; }
th.cut { text-align: left; padding-left: 20px; }
th svg { position: absolute; right: 1px; top: 5px; width: 9px; height: 9px; }
th:last-child { border-right: 0; }
td { height: 22px; padding: 0; text-align: center; border: dotted var(--dot); border-width: 0 1px 1px 0; white-space: nowrap; overflow: hidden; }
td.l { text-align: left; padding-left: 5px; }
td.r, tbody.left td.r { text-align: right; padding-right: 3px; }
tbody.left td { text-align: left; padding-left: 5px; }
tbody.left td:first-child { padding-left: 6px; }
.sel td { background: #fff2cc; }
.op { display: flex; align-items: center; justify-content: center; width: 18px; height: 21px; border-right: 1px dotted var(--dot); color: #33348e; }
.box { width: 12px; height: 12px; border: 1px solid #33348e; background: #6670cf; box-shadow: inset 0 0 0 2px #fff; }
.foot { display: flex; align-items: stretch; height: 22px; flex: none; background: #efefef; border-top: 1px solid #e0e0e0; line-height: 20px; }
.cell { border-right: 1px solid #e0e0e0; padding-left: 4px; }
.cell.plain { border: 0; }
.cell.r { text-align: right; padding-right: 3px; }
.sum { margin-left: auto; padding-right: 3px; }
.tab { height: 20px; width: 61px; align-self: flex-start; flex: none; background: var(--gold); border: 1px solid var(--line); border-bottom: 0; font-weight: bold; }
.tab.wide { width: 90px; }

.status { display: flex; align-items: center; gap: 4px; height: 24px; flex: none; padding: 0 13px 0 4px; background: var(--head); border-top: 1px solid var(--line); white-space: nowrap; }
.db { margin-left: 10px; }
.who { margin-left: auto; }

/* entry window */
.dialog { position: absolute; top: 23px; left: 405px; right: 45px; bottom: 0; display: flex; flex-direction: column; background: var(--bg); border: solid var(--title); border-width: 0 1px; box-shadow: 0 0 4px rgba(40, 50, 100, .4); }
.title { display: flex; align-items: center; height: 31px; flex: none; gap: 4px; padding-left: 4px; background: var(--title); color: #fff; font: 12px/16px var(--caption); white-space: nowrap; }
.bar { display: flex; height: 47px; flex: none; padding-left: 3px; background: var(--head); font: 11px/14px var(--ui); }
.bar button { display: flex; flex-direction: column; align-items: center; padding-top: 2px; gap: 5px; flex: none; }
.bar svg { width: 20px; height: 20px; }
.bar .drop { justify-content: center; }
.bar .drop:disabled { opacity: .5; }
.sep { width: 2px; height: 25px; margin-top: 10px; background: #8aace4; flex: none; }
.w10 { width: 10px; } .w15 { width: 15px; } .w34 { width: 34px; } .w36 { width: 36px; } .w38 { width: 38px; } .w40 { width: 40px; }
.w42 { width: 42px; } .w44 { width: 44px; } .w48 { width: 48px; } .w50 { width: 50px; } .w72 { width: 72px; }
.body { flex: 1; min-height: 0; display: flex; flex-direction: column; padding: 0 8px 6px; }
h1 { margin: 0; padding: 7px 3px 8px; font: bold 16px/24px var(--ui); }
.boxes { display: flex; gap: 8px; padding: 0 1px; }
fieldset { margin: 0; min-width: 0; border: 1px solid var(--line); display: flex; flex-direction: column; }
legend { padding: 0 3px; margin-left: -5px; font-weight: bold; }
.general { flex: 1; gap: 4px; padding: 11px 6px 26px 8px; }
.voucher { width: 208px; gap: 3px; padding: 9px 7px 8px 8px; }
.line { display: flex; align-items: center; }
.general label { width: 72px; }
.line input { flex: 1; height: 21px; padding: 0 4px; }
#dg { border-color: #2f3e7e; }
#dg::selection { background: #0078d7; color: #fff; }
.zoom { display: grid; place-items: center; width: 23px; height: 23px; margin-left: auto; background: var(--head); border: 1px solid var(--line); }
.voucher label { width: 86px; }
.voucher .combo { flex: 1; }
.fold { align-self: center; display: flex; align-items: center; justify-content: center; width: 50px; height: 8px; flex: none; margin: 6px 0 8px; border: 1px solid var(--line); }
.fold i { border: 3px solid transparent; border-bottom: 4px solid #555; border-top: 0; }
.entry { flex: 1; }
.entry td:nth-child(3) { border-right: 1px solid #777; }
.cell.strong { border-right-color: #777; }
.new td { background: #ffffe1; }
tbody.left .new td:first-child { padding-left: 3px; }

/* taskbar */
.taskbar { display: flex; height: 30px; flex: none; background: linear-gradient(90deg, #243840 0, #2a3b45 30%, #393f4e 36%, #393f4e 75%, #1f2c40 100%); color: #fff; }
.t { display: flex; align-items: center; justify-content: center; width: 33px; margin: 0 2px; border-bottom: 2px solid transparent; }
.t:first-child { margin-left: 0; }
.t svg { width: 18px; height: 18px; }
.open { border-bottom-color: #b4b4b8; }
.active { background: #45545c; }
.tray { display: flex; align-items: center; gap: 12px; margin-left: auto; padding-right: 4px; font: 11px/16px var(--ui); white-space: nowrap; }
.temp { font-size: 13px; margin-left: -4px; }
.sky { margin: 0 -2px; }
.clock { margin: 0 10px 0 4px; }
.edge { width: 1px; height: 30px; margin-left: 7px; background: #8a93a3; }
```
FILE: app.js
```js
const description = document.getElementById("dg");
description.focus();
description.select();
```
